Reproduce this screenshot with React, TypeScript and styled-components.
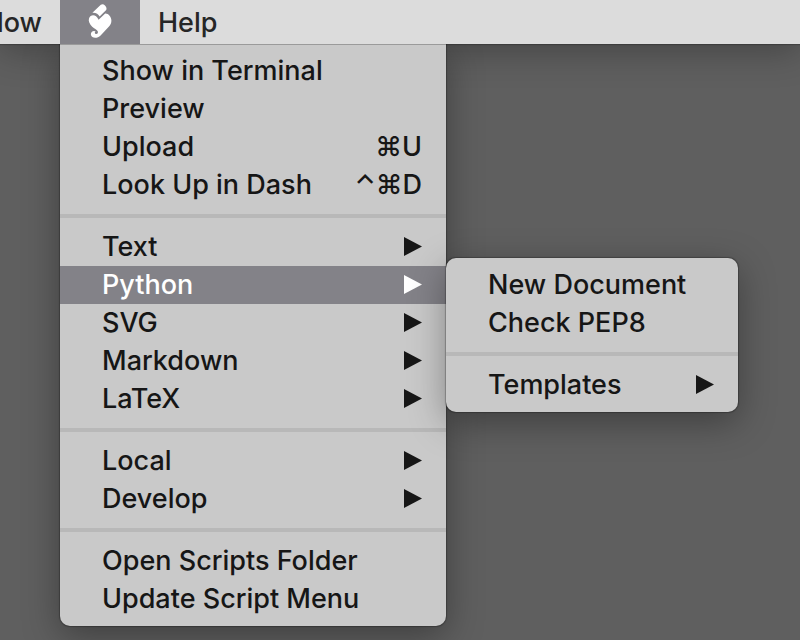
import React from "react";
import styled, { createGlobalStyle } from "styled-components";

const GlobalStyle = createGlobalStyle`
  * { box-sizing: border-box; }
  html, body, #root { height: 100%; }
  body {
    margin: 0;
    overflow: hidden;
    background: #5f5f5f;
    font-family: Inter, "Liberation Sans", sans-serif;
    font-size: 27px;
    font-weight: 450;
    color: #161616;
  }
`;

const Desktop = styled.div`
  min-height: 100%;
`;

const MenuBar = styled.nav`
  display: flex;
  height: 44px;
  background: #dcdcdc;
  box-shadow: 0 1px 1px rgba(0, 0, 0, 0.2), 0 6px 36px rgba(0, 0, 0, 0.3);
`;

const BarButton = styled.button`
  flex: none;
  border: 0;
  padding: 2px 18px 0;
  background: transparent;
  color: #262626;
  font: inherit;
  line-height: 42px;
`;

const ClippedSlot = styled.div`
  display: flex;
  justify-content: flex-end;
  width: 60px;
  overflow: hidden;
`;

const ScriptSlot = styled.div`
  position: relative;
  width: 80px;
`;

const ScriptButton = styled.button`
  display: flex;
  align-items: center;
  justify-content: center;
  width: 100%;
  height: 44px;
  border: 0;
  padding: 0;
  background: #838288;
`;

const Panel = styled.div`
  position: absolute;
  padding: 8px 0;
  background: #c9c9c9;
  box-shadow: 0 0 1px 1px rgba(0, 0, 0, 0.25), 0 10px 36px rgba(0, 0, 0, 0.35);
`;

const Menu = styled(Panel)`
  top: 44px;
  left: 0;
  width: 386px;
  padding-top: 7px;
  border-top: 1px solid #9a9a9a;
  border-radius: 0 0 10px 10px;
  clip-path: inset(0 -400px -60px -60px);
`;

const SubMenu = styled(Panel)`
  top: -8px;
  left: 100%;
  width: 292px;
  border-radius: 10px;
`;

const ItemSlot = styled.div`
  position: relative;
`;

const Item = styled.button<{ $active?: boolean }>`
  display: flex;
  align-items: center;
  justify-content: space-between;
  width: 100%;
  height: 38px;
  border: 0;
  padding: 0 24px 0 42px;
  background: ${(p) => (p.$active ? "#838288" : "transparent")};
  color: ${(p) => (p.$active ? "#ffffff" : "#161616")};
  font: inherit;
  line-height: 38px;
  white-space: nowrap;
`;

const Separator = styled.hr`
  height: 4px;
  margin: 10px 0;
  border: 0;
  background: #b8b8b8;
`;

const Arrow = () => (
  <svg width="18" height="20" viewBox="0 0 18 20" aria-hidden="true">
    <path d="M0 0 18 9.5 0 19Z" fill="currentColor" />
  </svg>
);

const ScriptIcon = () => (
  <svg width="28" height="36" viewBox="0 0 28 36" aria-hidden="true">
    <path
      fill="#fff"
      d="M6.4 8.8 14.8 .8Q16.8 -.8 19 1.4Q21.2 3.6 20.2 6L13.6 12.6C12.4 10 9.6 8.4 6.4 8.8Z"
    />
    <path
      fill="#fff"
      d="M3 14.4C4.6 10.2 10 10 12.6 15.8L19.2 9.4C22.4 9.2 25.4 12.8 25.4 16.6C25.4 19 24.6 20.8 23.2 22.3L14.6 31.4C11.2 34.9 5.5 34.4 4.9 30.7C4.5 27.7 7.6 26.1 9.7 27.5C8.5 28 8.5 29.6 9.8 30C11.6 30.4 12.5 28.6 11.6 27C10.8 25.4 8.2 24.6 6.2 22.7C3.6 20 2.1 17 3 14.4Z"
    />
  </svg>
);

interface Entry {
  label: string;
  keys?: string;
  arrow?: boolean;
  children?: Entry[][];
}

const groups: Entry[][] = [
  [
    { label: "Show in Terminal" },
    { label: "Preview" },
    { label: "Upload", keys: "⌘U" },
    { label: "Look Up in Dash", keys: "⌃⌘D" },
  ],
  [
    { label: "Text", arrow: true },
    {
      label: "Python",
      arrow: true,
      children: [
        [{ label: "New Document" }, { label: "Check PEP8" }],
        [{ label: "Templates", arrow: true }],
      ],
    },
    { label: "SVG", arrow: true },
    { label: "Markdown", arrow: true },
    { label: "LaTeX", arrow: true },
  ],
  [
    { label: "Local", arrow: true },
    { label: "Develop", arrow: true },
  ],
  [{ label: "Open Scripts Folder" }, { label: "Update Script Menu" }],
];

const Entries = ({ groups }: { groups: Entry[][] }) => (
  <>
    {groups.map((group, index) => (
      <React.Fragment key={index}>
        {index > 0 && <Separator />}
        {group.map((entry) => (
          <ItemSlot key={entry.label} role="none">
            <Item role="menuitem" $active={!!entry.children}>
              <span>{entry.label}</span>
              {entry.keys && <span>{entry.keys}</span>}
              {entry.arrow && <Arrow />}
            </Item>
            {entry.children && (
              <SubMenu role="menu" aria-label={entry.label}>
                <Entries groups={entry.children} />
              </SubMenu>
            )}
          </ItemSlot>
        ))}
      </React.Fragment>
    ))}
  </>
);

export default function App() {
  return (
    <Desktop>
      <GlobalStyle />
      <MenuBar>
        <ClippedSlot>
          <BarButton>Window</BarButton>
        </ClippedSlot>
        <ScriptSlot>
          <ScriptButton aria-label="Scripts" aria-expanded="true">
            <ScriptIcon />
          </ScriptButton>
          <Menu role="menu" aria-label="Scripts">
            <Entries groups={groups} />
          </Menu>
        </ScriptSlot>
        <BarButton>Help</BarButton>
      </MenuBar>
    </Desktop>
  );
}
